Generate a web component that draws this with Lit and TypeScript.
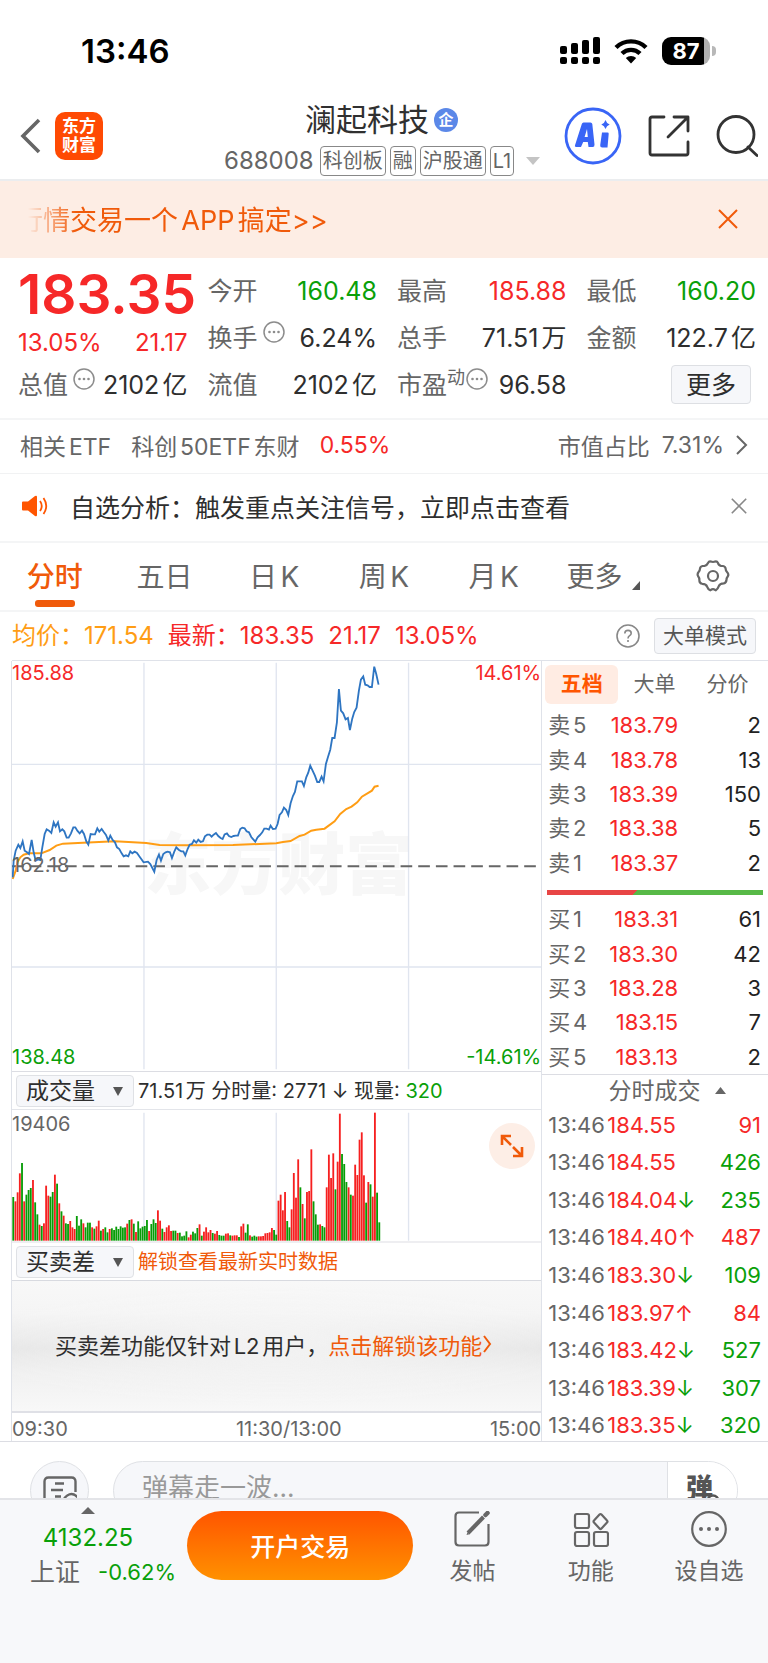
import { LitElement, html, svg, css } from "lit";
import { customElement } from "lit/decorators.js";
import { classMap } from "lit/directives/class-map.js";

type Tone = "up" | "down" | "";

interface Stat {
  label: string;
  value: string;
  tone: Tone;
  info?: boolean;
  sup?: string;
}

const topStats: Stat[] = [
  { label: "今开", value: "160.48", tone: "down" },
  { label: "最高", value: "185.88", tone: "up" },
  { label: "最低", value: "160.20", tone: "down" },
  { label: "换手", value: "6.24%", tone: "", info: true },
  { label: "总手", value: "71.51万", tone: "" },
  { label: "金额", value: "122.7亿", tone: "" },
];

const bottomStats: Stat[] = [
  { label: "总值", value: "2102亿", tone: "", info: true },
  { label: "流值", value: "2102亿", tone: "" },
  { label: "市盈", value: "96.58", tone: "", info: true, sup: "动" },
];

const asks: [string, string, string][] = [
  ["卖5", "183.79", "2"],
  ["卖4", "183.78", "13"],
  ["卖3", "183.39", "150"],
  ["卖2", "183.38", "5"],
  ["卖1", "183.37", "2"],
];

const bids: [string, string, string][] = [
  ["买1", "183.31", "61"],
  ["买2", "183.30", "42"],
  ["买3", "183.28", "3"],
  ["买4", "183.15", "7"],
  ["买5", "183.13", "2"],
];

const trades: [string, string, Tone, string, Tone][] = [
  ["13:46", "184.55", "", "91", "up"],
  ["13:46", "184.55", "", "426", "down"],
  ["13:46", "184.04", "down", "235", "down"],
  ["13:46", "184.40", "up", "487", "up"],
  ["13:46", "183.30", "down", "109", "down"],
  ["13:46", "183.97", "up", "84", "up"],
  ["13:46", "183.42", "down", "527", "down"],
  ["13:46", "183.39", "down", "307", "down"],
  ["13:46", "183.35", "down", "320", "down"],
];

const priceLine =
  "39,680 42,630 48,600 56,582 62,592 69,572 75,600 82,605 88,610 96,568 102,605 108,630 115,626 122,628 128,590 135,550 141,536 148,540 155,547 162,515 168,528 175,515 181,542 188,536 194,542 201,561 207,561 214,548 221,530 227,530 233,540 240,548 247,540 253,550 260,572 266,582 273,550 280,551 286,551 293,533 299,543 306,535 313,545 319,553 326,570 332,555 339,568 346,575 352,590 359,595 366,608 372,617 379,614 386,617 392,602 398,608 405,603 412,607 420,618 432,635 445,633 452,640 464,663 471,628 478,612 484,630 491,610 498,605 504,603 511,605 517,622 524,603 530,590 537,597 545,602 551,602 557,614 564,595 570,582 577,580 583,569 590,576 596,567 603,574 610,572 616,557 623,552 630,552 636,558 642,552 649,547 656,556 663,562 669,565 675,551 682,548 688,556 695,559 702,556 708,555 715,555 722,535 728,531 735,533 741,542 748,545 755,559 761,566 767,573 774,560 781,553 788,545 794,534 801,534 808,537 813,525 820,535 828,534 834,520 840,493 847,485 853,471 860,478 866,493 873,458 880,436 886,424 893,392 907,392 913,406 920,380 926,366 932,345 939,360 946,375 953,394 959,394 966,378 972,392 979,340 985,320 992,297 998,262 1005,262 1012,215 1018,115 1024,180 1031,188 1038,206 1045,202 1051,238 1058,204 1064,184 1071,171 1078,120 1084,87 1091,77 1097,102 1104,104 1110,109 1117,109 1124,48 1130,70 1137,102";

const averageLine =
  "39,685 48,660 54,633 62,620 72,612 88,608 125,608 150,598 170,585 190,579 250,576 346,572 400,575 440,577 480,583 560,584 700,583 830,578 850,574 873,571 900,556 915,552 935,540 950,537 975,534 1005,512 1022,490 1040,475 1056,468 1073,455 1087,438 1117,420 1125,408 1137,405";

/* One bar per minute: the top of the bar on the chart's scale, and its direction. */
const volumeBase = 540;
const volumeBars =
  "409g 422r 395r 338r 307g 422r 402g 388g 382g 358r 425g 461g 492r 496g 488r 375r 405r 408g 394g 342r 369g 428r 452g 465r 488g 490g 481r 500r 505r 466g 495g 476g 488r 500g 486g 486g 500r 504g 497r 480r 510g 505r 500g 515g 505r 503g 508g 498g 505g 497g 501g 500g 489r 478g 476r 489g 514r 482g 503g 498g 496g 478g 511r 490g 476g 487g 449r 480r 504g 514r 500r 494r 511r 510g 510g 517r 516g 527g 525g 512g 530r 522r 513g 518g 502g 491r 525g 513r 500r 515r 508r 517g 519r 511r 523g 525g 525g 519r 518r 524g 525r 524r 524r 529g 497r 489r 516g 491g 524r 528g 525g 528g 527r 527r 526r 518r 517r 515r 502r 508g 522g 420r 402r 449r 394r 481g 500g 446r 337r 411r 296r 380g 430r 473g 394r 391r 266r 422g 461g 492g 491r 496g 500g 380r 282r 352r 278r 386g 303r 159r 280g 310g 364g 380r 402g 405r 312r 343r 237r 215r 344r 426g 364r 371g 408r 156r 396g 485g"
    .split(" ")
    .map((bar) => ({ top: parseInt(bar, 10), up: bar.endsWith("r") }));
const volumeStep = 1105 / volumeBars.length;

const closeIcon = html`<svg class="close-icon" viewBox="0 0 20 20" aria-hidden="true">
  <path d="M1 1 19 19M19 1 1 19" />
</svg>`;

const infoIcon = html`<svg class="info-icon" viewBox="0 0 24 24" aria-hidden="true">
  <circle cx="12" cy="12" r="10" fill="none" stroke="#8c8c8c" stroke-width="1.5" />
  <g fill="#8c8c8c"><circle cx="7.5" cy="12" r="1.3" /><circle cx="12" cy="12" r="1.3" /><circle cx="16.500" cy="12" r="1.3" /></g>
</svg>`;

const tones = css`
  :host {
    display: block;
  }
  * {
    box-sizing: border-box;
  }
  .up {
    color: #f62828;
  }
  .down {
    color: #09a009;
  }
  button,
  select,
  input {
    font: inherit;
    color: inherit;
    margin: 0;
    padding: 0;
    border: 0;
    background: none;
  }
  button,
  select {
    cursor: pointer;
  }
  a {
    color: inherit;
    text-decoration: none;
  }
  svg {
    display: block;
    flex: none;
  }
`;

@customElement("stock-header")
class StockHeader extends LitElement {
  static styles = [
    tones,
    css`
      .status {
        display: flex;
        justify-content: space-between;
        align-items: center;
        height: 102px;
        padding: 0 52px 0 81px;
        color: #000;
      }
      .clock {
        font-size: 33px;
        font-weight: 600;
      }
      .indicators {
        display: flex;
        align-items: center;
        gap: 14px;
      }
      .battery {
        display: flex;
        align-items: center;
        gap: 2px;
      }
      .level {
        width: 48px;
        height: 28px;
        border-radius: 9px;
        background: linear-gradient(90deg, #000 87%, #b0b0b0 87%);
        color: #fff;
        font-size: 22px;
        line-height: 28px;
        font-weight: 700;
        text-align: center;
      }
      .tip {
        width: 4px;
        height: 10px;
        border-radius: 0 4px 4px 0;
        background: #b8b8b8;
      }
      .bar {
        display: grid;
        grid-template-columns: 204px minmax(0, 1fr) 204px;
        grid-template-rows: 68px;
        align-items: center;
        height: 79px;
        padding: 0 10px 0 20px;
        border-bottom: 2px solid #ebedef;
      }
      .left,
      .actions {
        display: flex;
        align-items: center;
      }
      .left {
        gap: 13px;
      }
      .logo {
        width: 48px;
        height: 48px;
        padding-top: 5px;
        border-radius: 10px;
        background: #ff4a03;
        color: #fff;
        font-size: 17px;
        line-height: 19px;
        font-weight: 700;
        text-align: center;
      }
      .actions {
        justify-content: flex-end;
        gap: 26px;
      }
      .middle {
        display: flex;
        flex-direction: column;
        align-items: flex-start;
        align-self: start;
        gap: 8px;
      }
      .name {
        display: flex;
        align-items: center;
        gap: 5px;
        margin: 0 0 0 81px;
        color: #303030;
        font-size: 31px;
        line-height: 36px;
        font-weight: 400;
      }
      .company {
        width: 24px;
        height: 24px;
        border-radius: 50%;
        background: #5b88e8;
        color: #fff;
        font-size: 15px;
        line-height: 23px;
        font-weight: 700;
        text-align: center;
      }
      .code {
        display: flex;
        align-items: center;
        gap: 4px;
        color: #666;
        font-size: 20px;
        line-height: 28px;
        white-space: nowrap;
      }
      .number {
        margin-right: 2px;
        font-size: 24px;
      }
      .tag {
        padding: 0 2px;
        border: 1px solid #888;
        border-radius: 4px;
      }
      .caret {
        margin-left: 8px;
      }
    `,
  ];

  render() {
    return html`
      <div class="status">
        <span class="clock">13:46</span>
        <div class="indicators">
          <svg width="40" height="28" viewBox="0 0 40 28" aria-hidden="true">
            <rect x="0" y="9" width="7" height="8" rx="2" />
            <rect x="11" y="6" width="7" height="11" rx="2" />
            <rect x="22" y="3" width="7" height="14" rx="2" />
            <rect x="33" y="0" width="7" height="17" rx="2" />
            <rect x="0" y="20" width="7" height="7" rx="2" />
            <rect x="11" y="20" width="7" height="7" rx="2" />
            <rect x="22" y="20" width="7" height="7" rx="2" />
            <rect x="33" y="20" width="7" height="7" rx="2" />
          </svg>
          <svg width="34" height="26" viewBox="0 0 34 26" aria-hidden="true">
            <g fill="none" stroke="#000" stroke-width="4.400">
              <path d="M2 9.500a21.500 21.500 0 0 1 30 0" />
              <path d="M8 15.500a13 13 0 0 1 18 0" />
            </g>
            <path d="M17 25.500 11.800 20a7.500 7.500 0 0 1 10.400 0z" />
          </svg>
          <div class="battery"><span class="level">87</span><span class="tip"></span></div>
        </div>
      </div>
      <header class="bar">
        <div class="left">
          <button aria-label="返回">
            <svg width="22" height="36" viewBox="0 0 22 36" fill="none" stroke="#666" stroke-width="3.600">
              <path d="M19 2 3 18l16 16" />
            </svg>
          </button>
          <div class="logo">东方<br />财富</div>
        </div>
        <div class="middle">
          <h1 class="name">澜起科技<span class="company">企</span></h1>
          <div class="code">
            <span class="number">688008</span>
            <span class="tag">科创板</span><span class="tag">融</span><span class="tag">沪股通</span
            ><span class="tag">L1</span>
            <svg class="caret" width="14" height="8" viewBox="0 0 14 8" fill="#c4c4c4"><path d="M0 0h14L7 8z" /></svg>
          </div>
        </div>
        <div class="actions">
          <button aria-label="AI">
            <svg width="58" height="58" viewBox="0 0 58 58">
              <circle cx="29" cy="29" r="27" fill="none" stroke="#3965f6" stroke-width="2.800" />
              <path
                fill="#3965f6"
                fill-rule="evenodd"
                d="M19.500 15.500h7q1.500 0 1.800 1.500L30.500 37.500q.2 2.500-1.800 2.500h-4.200l-.7-5h-4.600L17 40h-4.800q-2 0-1.200-1.800L17.800 17q.4-1.500 1.700-1.500zM23 22l-2.400 8h3.200z"
              />
              <path fill="#3965f6" d="M38 25.500h5.500q1.300 0 1.200 1.300L43.500 40.500h-5.300q-2.200 0-2-2.200zM41.500 13q1 3.500 4.200 4.500-3.200 1-4.200 4.500-1-3.500-4.200-4.500 3.200-1 4.200-4.500z" />
            </svg>
          </button>
          <button aria-label="分享">
            <svg
              width="42"
              height="42"
              viewBox="0 0 42 42"
              fill="none"
              stroke="#333"
              stroke-width="2.800"
              stroke-linecap="round"
              stroke-linejoin="round"
            >
              <path d="M16 2H4Q2 2 2 4v34q0 2 2 2h34q2 0 2-2V27" />
              <path d="M26 2h14v14M40 2 20 22" />
            </svg>
          </button>
          <button aria-label="搜索">
            <svg width="42" height="42" viewBox="0 0 42 42" fill="none" stroke="#333" stroke-width="2.800" stroke-linecap="round">
              <circle cx="20" cy="19.500" r="18" />
              <path d="m32 32 9 8.500" />
            </svg>
          </button>
        </div>
      </header>
    `;
  }
}

@customElement("stock-quote")
class StockQuote extends LitElement {
  static styles = [
    tones,
    css`
      .promo {
        display: flex;
        align-items: center;
        justify-content: space-between;
        height: 77px;
        padding: 0 30px 2px 16px;
        background: #fdede4;
        color: #f05a0a;
        font-size: 27px;
      }
      .promo-text {
        mask-image: linear-gradient(90deg, transparent 12px, #000 60px);
      }
      .close-icon {
        width: 20px;
        height: 20px;
        fill: none;
        stroke: currentColor;
        stroke-width: 2;
      }
      .quote {
        display: grid;
        grid-template-columns: repeat(4, minmax(0, 1fr));
        column-gap: 20px;
        grid-auto-rows: 47px;
        align-items: center;
        margin: 0;
        padding: 9px 12px 10px 18px;
      }
      .lead {
        grid-row: span 2;
        display: flex;
        flex-direction: column;
        gap: 8px;
        padding-bottom: 5px;
      }
      .price {
        font-size: 55px;
        line-height: 54px;
        font-weight: 600;
        white-space: nowrap;
      }
      .change {
        display: flex;
        justify-content: space-between;
        font-size: 24px;
        line-height: 28px;
      }
      .stat {
        display: flex;
        justify-content: space-between;
        align-items: center;
        font-size: 25px;
        line-height: 36px;
        white-space: nowrap;
      }
      dt {
        display: flex;
        color: #666;
      }
      dd {
        margin: 0;
      }
      .plain {
        color: #2e2e2e;
      }
      .sup {
        font-size: 18px;
        line-height: 22px;
      }
      .info-icon {
        width: 24px;
        height: 24px;
        margin-left: 4px;
      }
      .sup + .info-icon {
        margin-left: 0;
      }
      .more {
        justify-self: end;
        width: 80px;
        height: 39px;
        margin-right: 5px;
        border: 1px solid #dddfe3;
        border-radius: 4px;
        background: #f6f7fa;
        color: #2e2e2e;
        font-size: 25px;
        line-height: 34px;
      }
      .etf {
        display: flex;
        align-items: center;
        gap: 20px;
        height: 56px;
        padding: 0 20px 4px;
        border-top: 2px solid #f4f5f6;
        border-bottom: 1px solid #f1f2f3;
        color: #666;
        font-size: 23px;
      }
      .share {
        display: flex;
        align-items: center;
        gap: 12px;
        margin-left: auto;
      }
      .notice {
        display: flex;
        align-items: center;
        height: 69px;
        padding: 0 21px 3px 22px;
        border-bottom: 2px solid #f4f5f6;
        color: #2e2e2e;
        font-size: 25px;
      }
      .notice-text {
        flex: 1;
        margin-left: 22px;
      }
      .notice .close-icon {
        width: 16px;
        height: 16px;
        color: #888;
      }
    `,
  ];

  private stat(item: Stat) {
    return html`<div class="stat">
      <dt>${item.label}${item.sup ? html`<span class="sup">${item.sup}</span>` : ""}${item.info ? infoIcon : ""}</dt>
      <dd class=${item.tone || "plain"}>${item.value}</dd>
    </div>`;
  }

  render() {
    return html`
      <div class="promo">
        <a class="promo-text" href="#trade">行情交易一个APP搞定&gt;&gt;</a>
        <button aria-label="关闭">${closeIcon}</button>
      </div>
      <dl class="quote">
        <div class="lead up">
          <dt class="price up">183.35</dt>
          <dd class="change"><span>13.05%</span><span>21.17</span></dd>
        </div>
        ${topStats.map((item) => this.stat(item))} ${bottomStats.map((item) => this.stat(item))}
        <button class="more">更多</button>
      </dl>
      <div class="etf">
        <span>相关ETF</span>
        <span>科创50ETF东财</span>
        <span class="up">0.55%</span>
        <a class="share" href="#etf">
          <span>市值占比</span><span>7.31%</span>
          <svg width="12" height="20" viewBox="0 0 12 20" fill="none" stroke="#666" stroke-width="2">
            <path d="m1 1 9 9-9 9" />
          </svg>
        </a>
      </div>
      <div class="notice">
        <svg width="26" height="22" viewBox="0 0 26 22" aria-hidden="true">
          <path fill="#ff5500" d="M1 6.500h5L13 1q2-1 2 1v18q0 2-2 1l-7-5.500H1q-1 0-1-1v-7q0-1 1-1z" />
          <path fill="none" stroke="#ff5500" stroke-width="1.800" d="M18 6q3.500 5 0 10M21.500 3q5.500 8 0 16" />
        </svg>
        <a class="notice-text" href="#signal">自选分析：触发重点关注信号，立即点击查看</a>
        <button aria-label="关闭提示">${closeIcon}</button>
      </div>
    `;
  }
}

@customElement("stock-chart")
class StockChart extends LitElement {
  static styles = [
    tones,
    css`
      :host {
        box-shadow: -1px 0 #dfe2e9;
      }
      .plot {
        position: relative;
        color: #666;
        font-size: 20px;
        line-height: 24px;
      }
      .minute {
        height: 411px;
        border-bottom: 1px solid #dcdde3;
      }
      .volume {
        height: 134px;
        border-top: 1px solid #e3e5ea;
        border-bottom: 2px solid #eeeef1;
      }
      .canvas {
        width: 100%;
        height: 100%;
      }
      .label {
        position: absolute;
      }
      .top {
        top: 0;
      }
      .peak {
        top: 2px;
      }
      .bottom {
        bottom: 2px;
      }
      .center {
        top: 192px;
      }
      .start {
        left: 0;
      }
      .end {
        right: 0;
      }
      .watermark {
        position: absolute;
        top: 164px;
        left: 25%;
        color: #f7f7f7;
        font-size: 67px;
        line-height: 80px;
        font-weight: 900;
        z-index: -1;
      }
      .expand {
        position: absolute;
        top: 13px;
        right: 6px;
        display: grid;
        place-items: center;
        width: 46px;
        height: 46px;
        border-radius: 50%;
        background: #fdeee6;
      }
      .toolbar {
        display: flex;
        align-items: center;
        gap: 4px;
        height: 37px;
        padding-left: 4px;
        color: #2e2e2e;
        font-size: 20px;
        line-height: 30px;
        white-space: nowrap;
      }
      .picker {
        position: relative;
      }
      .picker select {
        appearance: none;
        width: 118px;
        height: 32px;
        padding: 0 9px;
        border: 1px solid #dfe1e5;
        border-radius: 4px;
        background: #f6f7fa;
        font-size: 23px;
        line-height: 30px;
      }
      .arrow {
        position: absolute;
        top: 12px;
        right: 11px;
        pointer-events: none;
      }
      .orange {
        color: #f05a0a;
      }
      .locked {
        display: flex;
        align-items: center;
        justify-content: center;
        height: 133px;
        padding: 0 6px 4px 0;
        border-top: 1px solid #d8dae0;
        border-bottom: 2px solid #dfe0e6;
        background: radial-gradient(ellipse 60% 46% at 50% 50%, #f6f6f6cc, #f6f6f600),
          linear-gradient(#f8f8f8, #f5f5f5 25%, #e6e6e6 52%, #f1f1f1 72%, #f8f8f8);
        color: #2e2e2e;
        font-size: 22px;
        white-space: nowrap;
      }
      .axis {
        display: flex;
        justify-content: space-between;
        height: 28px;
        color: #666;
        font-size: 20px;
        line-height: 32px;
      }
      .noon {
        margin-left: 20px;
      }
    `,
  ];

  private picker(label: string, name: string) {
    return html`<div class="picker">
      <select aria-label=${name}>
        <option>${label}</option>
      </select>
      <svg class="arrow" width="10" height="9" viewBox="0 0 10 9" fill="#555"><path d="M0 0h10L5 9z" /></svg>
    </div>`;
  }

  render() {
    return html`
      <div class="plot minute">
        <div class="watermark">东方财富</div>
        <svg class="canvas" viewBox="37 31 1588 1230" preserveAspectRatio="none" role="img" aria-label="分时走势">
          <g stroke="#e0e5ef" stroke-width="4">
            <path d="M37 341H1625M37 949H1625M433 36V1256M830 36V1256M1227 36V1256" />
          </g>
          <path d="M37 647H1612" stroke="#666" stroke-width="6" stroke-dasharray="35 18" />
          <polyline points=${averageLine} fill="none" stroke="#ff9d14" stroke-width="6" />
          <polyline points=${priceLine} fill="none" stroke="#2e75c2" stroke-width="5.500" />
        </svg>
        <span class="label top start up">185.88</span>
        <span class="label top end up">14.61%</span>
        <span class="label center start">162.18</span>
        <span class="label bottom start down">138.48</span>
        <span class="label bottom end down">-14.61%</span>
      </div>
      <div class="toolbar">
        ${this.picker("成交量", "指标一")}
        <span>71.51万 分时量: 2771 ↓ 现量: <span class="down">320</span></span>
      </div>
      <div class="plot volume">
        <svg class="canvas" viewBox="37 148 1588 393" preserveAspectRatio="none" role="img" aria-label="成交量">
          <path d="M433 156V540M830 156V540M1227 156V540" stroke="#e0e5ef" stroke-width="4" />
          ${volumeBars.map(
            (bar, i) => svg`<rect
              x=${38 + i * volumeStep}
              y=${bar.top}
              width="5.500"
              height=${volumeBase - bar.top}
              fill=${bar.up ? "#f62020" : "#079c07"}
            />`
          )}
        </svg>
        <span class="label peak start">19406</span>
        <button class="expand" aria-label="全屏">
          <svg width="24" height="24" viewBox="0 0 24 24" fill="none" stroke="#f05a0a" stroke-width="2.600">
            <path d="M2 11V2h9M2 2l9 9M13 22h9v-9M22 22l-9-9" />
          </svg>
        </button>
      </div>
      <div class="toolbar">
        ${this.picker("买卖差", "指标二")}
        <a class="orange" href="#unlock">解锁查看最新实时数据</a>
      </div>
      <div class="locked">
        <span>买卖差功能仅针对L2用户，</span><a class="orange" href="#unlock">点击解锁该功能</a>
        <svg width="10" height="18" viewBox="0 0 10 18" fill="none" stroke="#f05a0a" stroke-width="2">
          <path d="m2 1 6 8-6 8" />
        </svg>
      </div>
      <div class="axis"><span>09:30</span><span class="noon">11:30/13:00</span><span>15:00</span></div>
    `;
  }
}

@customElement("order-book")
class OrderBook extends LitElement {
  static styles = [
    tones,
    css`
      :host {
        border-left: 1px solid #dfe2e9;
        font-size: 22px;
        line-height: 30px;
      }
      .tabs {
        display: grid;
        grid-template-columns: repeat(3, 1fr);
        padding: 4px 4px 4px 3px;
        color: #666;
        font-size: 21px;
      }
      .tabs button {
        height: 39px;
        padding-bottom: 1px;
        border-radius: 6px;
      }
      .tabs .active {
        background: #ffece3;
        color: #ff5500;
        font-weight: 700;
      }
      table {
        width: 100%;
        height: 172px;
        border-collapse: collapse;
        table-layout: fixed;
      }
      th,
      td {
        padding: 0;
        font-weight: 400;
        text-align: left;
        white-space: nowrap;
      }
      th {
        width: 58px;
        padding-left: 6px;
        color: #666;
      }
      .amount {
        padding-right: 7px;
        color: #222;
        text-align: right;
      }
      .price {
        width: 78px;
        text-align: right;
      }
      .ratio {
        display: flex;
        height: 5px;
        margin: 10px 5px 7px;
        background: linear-gradient(135deg, #e84545 41%, #57b947 41%);
      }
      .heading {
        display: flex;
        align-items: center;
        justify-content: center;
        gap: 14px;
        height: 32px;
        padding-left: 24px;
        border-top: 1px solid #dcdde3;
        color: #666;
        font-size: 23px;
      }
      .deals {
        height: 338px;
        margin-bottom: -3px;
      }
      .deals th {
        width: 65px;
      }
      .deals .price {
        width: 92px;
        text-align: left;
      }
      .amount.up {
        color: #f62828;
      }
      .amount.down {
        color: #09a009;
      }
    `,
  ];

  private levels(rows: [string, string, string][]) {
    return html`<table>
      ${rows.map(
        ([label, price, amount]) => html`<tr>
          <th scope="row">${label}</th>
          <td class="price up">${price}</td>
          <td class="amount">${amount}</td>
        </tr>`
      )}
    </table>`;
  }

  render() {
    return html`
      <div class="tabs">
        <button class="active">五档</button>
        <button>大单</button>
        <button>分价</button>
      </div>
      ${this.levels(asks)}
      <div class="ratio"></div>
      ${this.levels(bids)}
      <div class="heading">
        分时成交
        <svg width="11" height="7" viewBox="0 0 11 7" fill="#666"><path d="M0 7h11L5.500 0z" /></svg>
      </div>
      <table class="deals">
        ${trades.map(
          ([time, price, move, amount, side]) => html`<tr>
            <th scope="row">${time}</th>
            <td class="price">
              <span class="up">${price}</span
              >${move ? html`<span class=${move}>${move === "up" ? "↑" : "↓"}</span>` : ""}
            </td>
            <td class=${classMap({ amount: true, [side]: true })}>${amount}</td>
          </tr>`
        )}
      </table>
    `;
  }
}

@customElement("stock-footer")
class StockFooter extends LitElement {
  static styles = [
    tones,
    css`
      .chat {
        display: flex;
        gap: 24px;
        padding: 19px 30px 184px;
        border-top: 1px solid #dcdde3;
      }
      .round {
        display: grid;
        place-items: center;
        width: 59px;
        height: 59px;
        border: 1px solid #dfe1e5;
        border-radius: 50%;
        background: #f6f7fa;
      }
      .box {
        flex: 1;
        display: flex;
        height: 59px;
        border: 1px solid #dfe1e5;
        border-radius: 30px;
        background: #f6f7fa;
        overflow: hidden;
      }
      .box input {
        flex: 1;
        min-width: 0;
        padding: 0 28px 6px;
        color: #333;
        font-size: 26px;
      }
      .box input::placeholder {
        color: #999;
      }
      .toggle {
        position: relative;
        width: 70px;
        padding: 0 6px 8px 0;
        border-left: 1px solid #dfe1e5;
        background: #fff;
        color: #555;
        font-size: 27px;
        font-weight: 900;
      }
      .check {
        position: absolute;
        top: 32px;
        right: 17px;
      }
      .dock {
        position: fixed;
        right: 0;
        bottom: 0;
        left: 0;
        display: grid;
        grid-template-columns: 187px minmax(0, 226fr) repeat(3, minmax(0, 118fr));
        height: 165px;
        border-top: 2px solid #e3e4e8;
        background: #f7f8fa;
        color: #666;
        font-size: 23px;
      }
      .index {
        display: grid;
        justify-items: center;
        align-content: start;
        padding: 7px 11px 0 0;
      }
      .index-row {
        display: flex;
        align-items: center;
        justify-content: space-between;
        width: 100%;
        padding-left: 30px;
        font-size: 22px;
        line-height: 34px;
      }
      .points {
        padding: 9px 0 2px;
        font-size: 24px;
        line-height: 30px;
      }
      .place {
        font-size: 25px;
      }
      .trade {
        height: 69px;
        margin-top: 11px;
        padding-bottom: 2px;
        border-radius: 35px;
        background: linear-gradient(#ff5500, #ff9100);
        color: #fff;
        font-size: 25px;
        font-weight: 500;
      }
      .tool {
        display: flex;
        flex-direction: column;
        align-items: center;
        gap: 7px;
        padding-top: 11px;
        line-height: 34px;
        white-space: nowrap;
      }
    `,
  ];

  render() {
    return html`
      <div class="chat">
        <button class="round" aria-label="讨论">
          <svg width="34" height="30" viewBox="0 0 34 30" fill="none" stroke="#666" stroke-width="2.400">
            <path d="M32.500 16V5.500q0-4-4-4H5.500q-4 0-4 4V24q0 4 4 4H17M12 7.500h9M8 14h12M12 20.500h6M20 24q8.500-12 17 0-8.500 8-17 0z" />
          </svg>
        </button>
        <div class="box">
          <input type="text" aria-label="弹幕" placeholder="弹幕走一波..." />
          <button class="toggle">
            弹
            <svg class="check" width="14" height="14" viewBox="0 0 14 14">
              <circle cx="7" cy="7" r="5.500" fill="#fff" stroke="#555" stroke-width="2.400" />
            </svg>
          </button>
        </div>
      </div>
      <nav class="dock">
        <a class="index" href="#index">
          <svg width="14" height="7" viewBox="0 0 14 7" fill="#666"><path d="M0 7h14L7 0z" /></svg>
          <span class="points down">4132.25</span>
          <span class="index-row"><span class="place">上证</span><span class="down">-0.62%</span></span>
        </a>
        <button class="trade">开户交易</button>
        <button class="tool">
          <svg width="36" height="36" viewBox="0 0 36 36" fill="none" stroke="#666" stroke-width="2.200">
            <path d="M25 1.500H5Q1.500 1.500 1.500 5v26q0 3.500 3.500 3.500h26q3.500 0 3.500-3.500V13" />
            <path d="M14 22 29.500 6" stroke-width="4" />
            <path d="m31.500 4 2-2" stroke-width="4.500" stroke-linecap="round" />
            <path d="m12.500 24 3-.8-2-2z" fill="#666" stroke="none" />
          </svg>
          发帖
        </button>
        <button class="tool">
          <svg width="36" height="36" viewBox="0 0 36 36" fill="none" stroke="#666" stroke-width="2.200">
            <rect x="2" y="3" width="14" height="14" rx="2" />
            <rect x="2" y="21" width="14" height="14" rx="2" />
            <rect x="21" y="21" width="14" height="14" rx="2" />
            <path d="m26.500 3.500-5.500 6q-1 1 0 2l5.500 6q1 1 2 0l5.500-6q1-1 0-2l-5.500-6q-1-1-2 0z" />
          </svg>
          功能
        </button>
        <button class="tool">
          <svg width="36" height="36" viewBox="0 0 36 36">
            <circle cx="18" cy="18" r="16.800" fill="none" stroke="#666" stroke-width="2.200" />
            <g fill="#666"><circle cx="10" cy="18" r="2" /><circle cx="18" cy="18" r="2" /><circle cx="26" cy="18" r="2" /></g>
          </svg>
          设自选
        </button>
      </nav>
    `;
  }
}

@customElement("app-root")
class AppRoot extends LitElement {
  static styles = [
    tones,
    css`
      :host {
        position: relative;
        z-index: 0;
        min-height: 100vh;
        background: #fff;
        color: #2e2e2e;
        font-family: Inter, "Noto Sans CJK SC", sans-serif;
        text-autospace: normal;
      }
      .periods {
        display: grid;
        grid-template-columns: repeat(7, minmax(0, 1fr));
        align-items: center;
        justify-items: center;
        height: 69px;
        padding-bottom: 2px;
        border-bottom: 2px solid #f4f5f6;
        color: #666;
        font-size: 28px;
      }
      .period {
        position: relative;
        height: 62px;
        padding-bottom: 2px;
        white-space: nowrap;
      }
      .period.active {
        color: #f05a0a;
        font-weight: 500;
      }
      .period.active::after {
        content: "";
        position: absolute;
        left: 8px;
        right: 8px;
        bottom: 0;
        height: 7px;
        border-radius: 3px;
        background: #f05a0a;
      }
      .drop {
        display: flex;
        align-items: center;
        gap: 10px;
      }
      .corner {
        margin-top: 22px;
      }
      .summary {
        display: flex;
        align-items: center;
        gap: 14px;
        height: 48px;
        padding: 0 12px;
        font-size: 24px;
        line-height: 36px;
        white-space: nowrap;
      }
      .average {
        color: #ff9d14;
      }
      .help {
        margin-left: auto;
      }
      .mode {
        width: 102px;
        height: 36px;
        border: 1px solid #dddfe3;
        border-radius: 4px;
        background: #f6f7fa;
        color: #555;
        font-size: 21px;
        line-height: 32px;
      }
      .market {
        display: grid;
        grid-template-columns: minmax(0, 7fr) minmax(0, 3fr);
        margin-left: 12px;
        border-top: 1px solid #dfe2e9;
      }
    `,
  ];

  render() {
    return html`
      <stock-header></stock-header>
      <stock-quote></stock-quote>
      <nav class="periods">
        <button class="period active">分时</button>
        <button class="period">五日</button>
        <button class="period">日K</button>
        <button class="period">周K</button>
        <button class="period">月K</button>
        <button class="period drop">
          更多
          <svg class="corner" width="8" height="9" viewBox="0 0 8 9" fill="#555"><path d="M8 0v9H0z" /></svg>
        </button>
        <button aria-label="设置">
          <svg width="34" height="32" viewBox="0 0 34 32" fill="none" stroke="#666" stroke-width="2.200">
            <path
              d="M12 3q1-2 3-1.400 2 .8 4 0 2-.6 3 1.400.6 2.400 3 2.800l2 .2q2.400.4 2.600 2.600 0 2 1.400 3.400Q33 14 32 16q-1.600 2-1.600 4.400-.2 2.400-2.600 3-4 0-5 2.800-1 3-3 4-2-1-2.800-1-1 0-2.800 1-2-.6-3-3.400-1-3-5-3-2.600-.6-2.800-3Q3.600 18 2 16q-1-2 .6-4Q4 10.600 4 8.600 4.200 6.400 6.600 6l2-.2Q11 5.400 12 3z"
            />
            <circle cx="17" cy="16" r="5" />
          </svg>
        </button>
      </nav>
      <div class="summary">
        <span class="average">均价：171.54</span>
        <span class="up">最新：183.35</span>
        <span class="up">21.17</span>
        <span class="up">13.05%</span>
        <svg class="help" width="24" height="24" viewBox="0 0 24 24" fill="none" stroke="#888" stroke-width="1.600">
          <circle cx="12" cy="12" r="11" />
          <path d="M8.800 9.600q0-3.200 3.200-3.200t3.200 2.800q0 1.400-1.600 2.400-1.600 1-1.600 2.800M12 16v2" />
        </svg>
        <button class="mode">大单模式</button>
      </div>
      <main class="market">
        <stock-chart></stock-chart>
        <order-book></order-book>
      </main>
      <stock-footer></stock-footer>
    `;
  }
}
